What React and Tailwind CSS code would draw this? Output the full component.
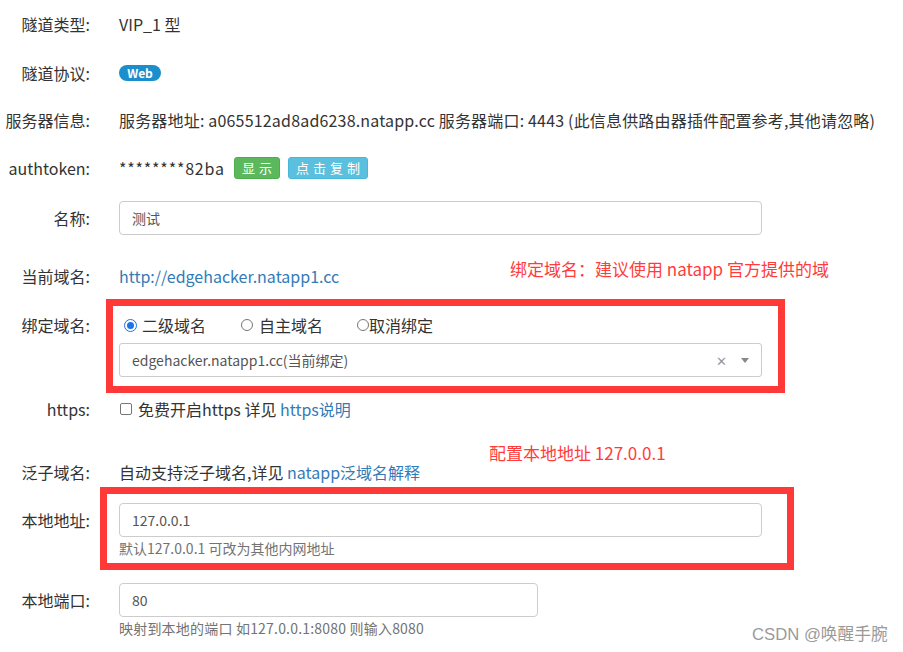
import React from "react";

const font = { fontFamily: '"Noto Sans CJK SC", "Noto Sans", sans-serif' };

function Row({ label, children, className = "" }) {
  return (
    <div className={"flex " + className}>
      <div className="w-[90px] shrink-0 h-[34px] flex items-center justify-end text-[#333] whitespace-nowrap">{label}</div>
      <div className="ml-[29px] flex-1 min-w-0">{children}</div>
    </div>
  );
}

function Line({ children, className = "" }) {
  return <div className={"h-[34px] flex items-center " + className}>{children}</div>;
}

function Radio({ checked }) {
  return checked ? (
    <span className="inline-flex shrink-0 w-[13px] h-[13px] rounded-full border-[1.5px] border-[#1a73e8] items-center justify-center">
      <span className="w-[7px] h-[7px] rounded-full bg-[#1a73e8]" />
    </span>
  ) : (
    <span className="inline-block shrink-0 w-[12px] h-[12px] rounded-full border border-[#767676] bg-white" />
  );
}

export default function App() {
  return (
    <div className="relative w-[903px] h-[652px] bg-white overflow-hidden text-[16px] text-[#333] pt-[7px]" style={font}>
      <Row label="隧道类型:">
        <Line>VIP_1 型</Line>
      </Row>
      <Row label="隧道协议:" className="mt-[15px]">
        <Line>
          <span className="inline-flex items-center justify-center w-[42px] h-[16px] rounded-full bg-[#1a8fcc] text-white text-[12px] font-bold leading-none">Web</span>
        </Line>
      </Row>
      <Row label="服务器信息:" className="mt-[13px]">
        <Line className="whitespace-nowrap tracking-[0.18px]">服务器地址: a065512ad8ad6238.natapp.cc 服务器端口: 4443 (此信息供路由器插件配置参考,其他请忽略)</Line>
      </Row>
      <Row label="authtoken:" className="mt-[14px]">
        <Line>
          <span className="inline-block w-[106px] tracking-[0.8px] whitespace-nowrap">********82ba</span>
          <span className="ml-[9px] inline-flex items-center justify-center w-[46px] h-[22px] rounded-[3px] bg-[#5cb85c] border border-[#4cae4c] text-white text-[13px] tracking-[4px] pl-[4px]">显示</span>
          <span className="ml-[8px] inline-flex items-center justify-center w-[80px] h-[22px] rounded-[3px] bg-[#5bc0de] border border-[#46b8da] text-white text-[13px] tracking-[4px] pl-[4px]">点击复制</span>
        </Line>
      </Row>
      <Row label="名称:" className="mt-[16px]">
        <div className="w-[643px] h-[34px] border border-[#ccc] rounded-[4px] flex items-center pl-[12px] text-[#555] text-[14px]">测试</div>
      </Row>
      <Row label="当前域名:" className="mt-[24px]">
        <Line className="text-[#337ab7]">http://edgehacker.natapp1.cc</Line>
      </Row>
      <Row label="绑定域名:" className="mt-[15px]">
        <Line>
          <span className="ml-[5px] flex items-center"><Radio checked /><span className="ml-[5px]">二级域名</span></span>
          <span className="ml-[35px] flex items-center"><Radio /><span className="ml-[6px]">自主域名</span></span>
          <span className="ml-[34px] flex items-center"><Radio /><span className="ml-0">取消绑定</span></span>
        </Line>
        <div className="mt-[1px] w-[643px] h-[34px] border border-[#ccc] rounded-[3px] flex items-center pl-[12px] text-[#555] text-[14px]">
          <span className="flex-1">edgehacker.natapp1.cc(当前绑定)</span>
          <span className="text-[#999] text-[13px] leading-none mr-[14px]">✕</span>
          <span className="w-0 h-0 border-l-[4px] border-r-[4px] border-t-[5px] border-l-transparent border-r-transparent border-t-[#888] mr-[12px]" />
        </div>
      </Row>
      <Row label="https:" className="mt-[15px]">
        <Line>
          <span className="ml-[1px] inline-block shrink-0 w-[12px] h-[12px] rounded-[2px] border border-[#767676]" />
          <span className="ml-[6px] whitespace-pre">免费开启https 详见 </span>
          <span className="text-[#337ab7]">https说明</span>
        </Line>
      </Row>
      <Row label="泛子域名:" className="mt-[29px]">
        <Line className="whitespace-pre">
          自动支持泛子域名,详见 <span className="text-[#337ab7]">natapp泛域名解释</span>
        </Line>
      </Row>
      <Row label="本地地址:" className="mt-[14px]">
        <div className="w-[643px] h-[34px] border border-[#ccc] rounded-[4px] flex items-center pl-[12px] text-[#555] text-[14px]">127.0.0.1</div>
        <div className="h-[22px] flex items-center text-[14px] text-[#737373]">默认127.0.0.1 可改为其他内网地址</div>
      </Row>
      <Row label="本地端口:" className="mt-[24px]">
        <div className="w-[419px] h-[34px] border border-[#ccc] rounded-[4px] flex items-center pl-[12px] text-[#555] text-[14px]">80</div>
        <div className="h-[22px] flex items-center text-[14px] tracking-[0.2px] text-[#737373]">映射到本地的端口 如127.0.0.1:8080 则输入8080</div>
      </Row>

      {/* annotations */}
      <div className="absolute left-[510px] top-[256px] text-[17px] text-[#ff3c3c] whitespace-nowrap">绑定域名：建议使用 natapp 官方提供的域</div>
      <div className="absolute left-[106px] top-[299px] w-[679px] h-[94px] border-[7px] border-[#ff3838]" />
      <div className="absolute left-[489px] top-[440px] text-[17px] text-[#ff3c3c] whitespace-nowrap">配置本地地址 127.0.0.1</div>
      <div className="absolute left-[100px] top-[487px] w-[694px] h-[83px] border-[7px] border-[#ff3838]" />
      <div className="absolute left-[752px] top-[622px] text-[16.7px] text-[#9a9a9a] whitespace-nowrap" style={{ fontFamily: '"Liberation Sans", "Noto Sans CJK SC", sans-serif' }}>CSDN @唤醒手腕</div>
    </div>
  );
}
